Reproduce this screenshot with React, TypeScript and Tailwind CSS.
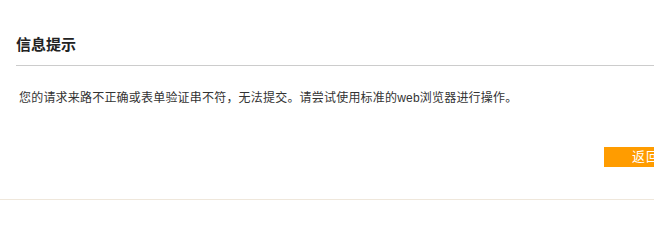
export default function App() {
  return (
    <div className="w-full overflow-hidden bg-white font-['Liberation_Sans','Noto_Sans_CJK_SC',sans-serif] text-[#333]">
      <div className="border-b border-[#efe7db] pb-[32px]">
        <div className="ml-4 w-[672px] pt-[33px]">
          <h3 className="border-b border-[#cccccc] pb-2 text-[15px] font-bold leading-[24px] text-[#222]">
            信息提示
          </h3>
          <p className="mt-[22px] pl-[3px] text-[12px] leading-[20px] tracking-[0.2px]">
            您的请求来路不正确或表单验证串不符，无法提交。请尝试使用标准的web浏览器进行操作。
          </p>
          <div className="mt-[39px] flex justify-end">
            <button
              type="button"
              className="h-[20px] w-[84px] bg-[#ff9c00] text-[13px] leading-[20px] tracking-[1px] text-white"
            >
              返回
            </button>
          </div>
        </div>
      </div>
    </div>
  );
}
